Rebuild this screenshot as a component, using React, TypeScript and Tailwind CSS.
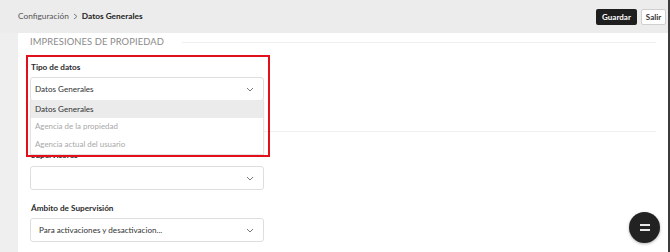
import React from 'react'

function Chevron() {
  return (
    <svg width="8" height="5" viewBox="0 0 8 5" className="shrink-0">
      <path d="M1 1 L4 4 L7 1" fill="none" stroke="#7a7a7a" strokeWidth="1" />
    </svg>
  )
}

function Select({ value, pl = 'pl-[4px]' }: { value?: string; pl?: string }) {
  return (
    <div className={`flex h-[24px] w-[234px] items-center justify-between rounded-[3px] border border-[#dedede] bg-white pr-[9px] ${pl}`}>
      <span className="text-[8.1px] text-[#333]">{value}</span>
      <Chevron />
    </div>
  )
}

export default function App() {
  return (
    <div className="relative h-[252px] w-[670px] overflow-hidden border-r-2 border-[#3c3c3c] bg-white font-['Lato',sans-serif]">
      {/* header */}
      <div className="flex h-[33px] items-center justify-between bg-[#ececec] pl-[18px] pr-[2px]">
        <div className="flex items-center gap-[4px] text-[8.3px]">
          <span className="text-[#555]">Configuración</span>
          <svg width="5" height="7" viewBox="0 0 5 7">
            <path d="M1 1 L4 3.5 L1 6" fill="none" stroke="#777" strokeWidth="1" />
          </svg>
          <span className="font-bold text-[#222]">Datos Generales</span>
        </div>
        <div className="flex items-center gap-[4px]">
          <button className="h-[16px] w-[41px] rounded-[2px] bg-[#1e1e1e] text-[8px] font-bold text-white">Guardar</button>
          <button className="h-[16px] w-[25px] rounded-[2px] border border-[#cfcfcf] bg-white text-[8px] font-bold text-[#333]">Salir</button>
        </div>
      </div>

      <div className="flex h-[219px]">
        <div className="w-[18px] bg-[#efefef]" />
        <div className="relative flex-1 px-[12px]">
          {/* section title */}
          <div className="mt-[2px] flex h-[14px] items-center gap-[18px]">
            <span className="text-[9.4px] uppercase tracking-[0.1px] text-[#8a8a8a]">Impresiones de propiedad</span>
            <div className="h-px flex-1 bg-[#f0f0f0]" />
          </div>

          {/* tipo de datos */}
          <div className="relative mt-[11px] w-[234px]">
            <div className="mb-[3px] h-[14px] pl-[1px] text-[8.2px] font-bold leading-[14px] text-[#2b2b2b]">Tipo de datos</div>
            <Select value="Datos Generales" />
            <div className="absolute left-0 top-[40px] z-10 w-[234px] border border-t-0 border-[#e2e2e2] bg-white text-[7.9px] shadow-[0_1px_2px_rgba(0,0,0,0.08)]">
              <div className="flex h-[18px] items-center bg-[#ebebeb] px-[4px] text-[8.1px] text-[#333]">Datos Generales</div>
              <div className="flex h-[18px] items-center px-[4px] text-[#a8a8a8]">Agencia de la propiedad</div>
              <div className="flex h-[18px] items-center px-[4px] text-[#a8a8a8]">Agencia actual del usuario</div>
            </div>
            <div className="absolute left-[-4px] top-[-5px] z-20 h-[102px] w-[244px] border-2 border-[#e3101c]" />
          </div>

          <div className="mt-[30px] h-px bg-[#f0f0f0]" />

          {/* supervisores */}
          <div className="mt-[16px] w-[234px]">
            <div className="mb-[4px] h-[14px] pl-[1px] text-[8.2px] font-bold leading-[14px] text-[#2b2b2b]">Supervisores</div>
            <Select />
          </div>

          <div className="mt-[11px] w-[234px]">
            <div className="mb-[3px] h-[14px] pl-[1px] text-[8.2px] font-bold leading-[14px] text-[#2b2b2b]">Ámbito de Supervisión</div>
            <Select value="Para activaciones y desactivacion..." pl="pl-[8px]" />
          </div>

          <button className="absolute left-[611px] top-[179px] flex h-[31px] w-[31px] flex-col items-center justify-center gap-[3px] rounded-full bg-[#222] shadow-[0_1px_3px_rgba(0,0,0,0.3)]">
            <span className="block h-[2px] w-[10px] bg-[#e8e8e8]" />
            <span className="block h-[2px] w-[10px] bg-[#e8e8e8]" />
          </button>
        </div>
      </div>
    </div>
  )
}
